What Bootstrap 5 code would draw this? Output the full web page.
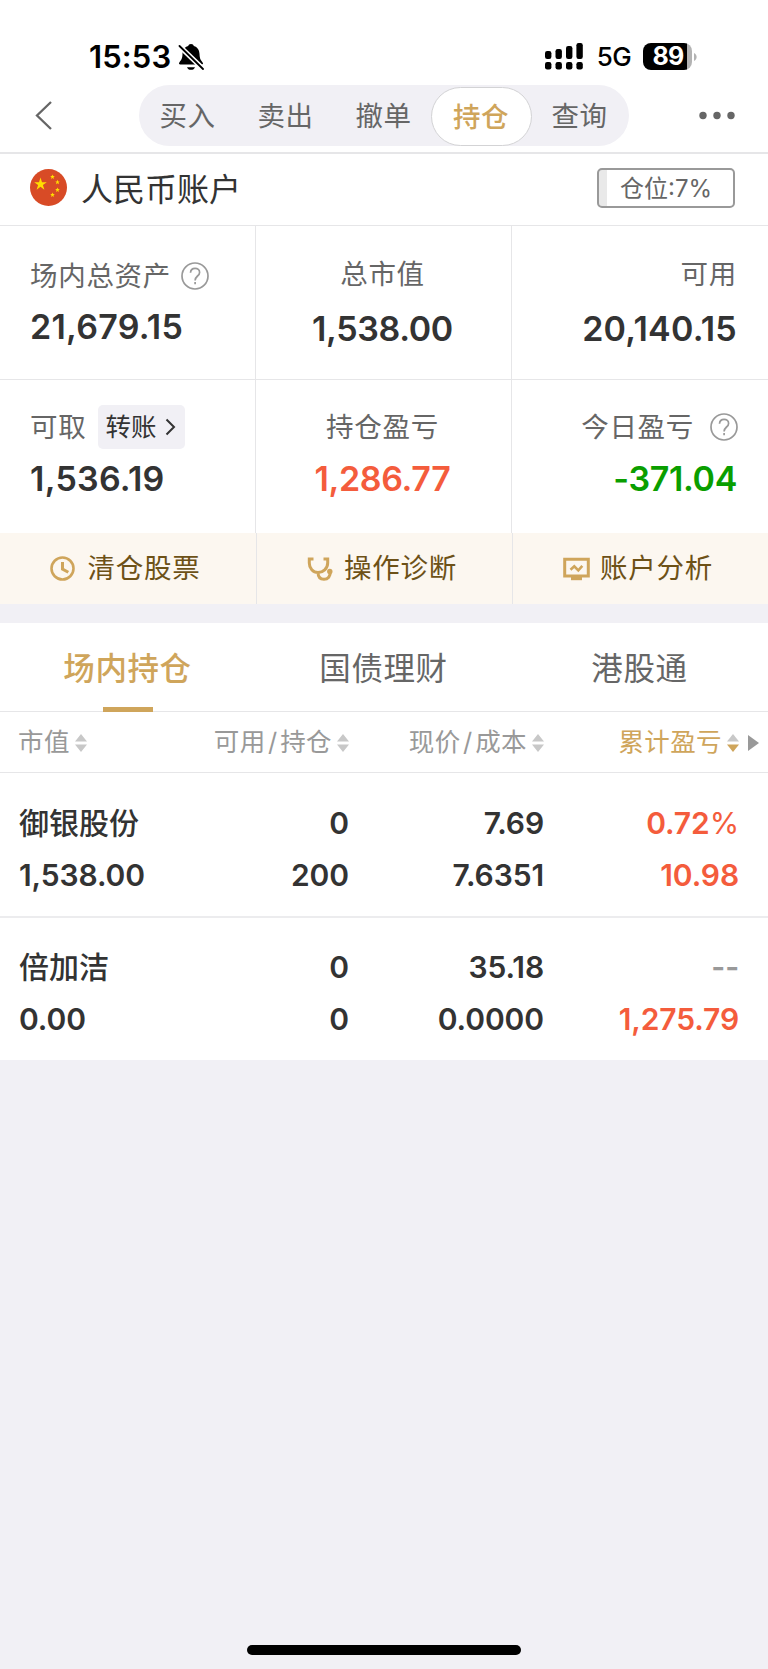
<!DOCTYPE html>
<html lang="zh-CN">
<head>
<meta charset="utf-8">
<meta name="viewport" content="width=device-width, initial-scale=1">
<title>持仓</title>
<link href="https://cdn.jsdelivr.net/npm/bootstrap@5.3.0/dist/css/bootstrap.min.css" rel="stylesheet">
<style>
  :root { --gold:#cfa55b; --ink:#333; --mid:#666; --soft:#999; --panel:#f1f0f5; --rule:#e6e6e8; --up:#f45c3c; --down:#0a9e00; }
  body { font-family: Inter, "Noto Sans CJK SC", sans-serif; background: var(--panel); color: var(--ink); min-height: 1669px; }
  svg { display: block; flex: none; }
  .status { height: 85px; padding: 31px 71px 0 89px; color: #000; }
  .clock { font-size: 31px; font-weight: 600; line-height: 52px; letter-spacing: .1px; }
  .signal { margin-top: -1px; }
  .net { font-size: 26px; line-height: 52px; letter-spacing: -.6px; font-weight: 500; margin: 0 12px 0 14px; }
  .battery { width: 49px; height: 27px; border-radius: 8px; background: linear-gradient(90deg,#000 44px,#b3b3b3 44px); color: #fff; font-size: 25px; font-weight: 700; line-height: 27px; padding-left: 9.5px; letter-spacing: -.8px; margin-top: -1px; }
  .topnav { height: 69px; border-bottom: 2px solid var(--rule); }
  .segments { width: 490px; height: 61px; margin-left: 85px; border-radius: 31px; background: var(--panel); }
  .segments a { flex: 1 1 0; font-size: 27.5px; line-height: 62px; color: var(--mid); letter-spacing: .5px; text-align: center; text-decoration: none; padding-right: 1px; }
  .segments a.active { flex: 0 0 101px; margin: 2px -1px 0 -2px; height: 59px; line-height: 58px; border: 1px solid #d3d3d5; border-radius: 30px; background: #fff; color: var(--gold); font-weight: 500; }
  .account { height: 72px; padding: 0 33px 0 30px; border-bottom: 1px solid var(--rule); }
  .account h1 { font-size: 32px; line-height: 40px; letter-spacing: 0; font-weight: 400; margin: 1px 0 0 14px; }
  .ratio { width: 138px; height: 40px; margin-top: -4px; border: 2px solid #999; border-radius: 5px; background: linear-gradient(90deg,#e9e9e9 8px,#fff 8px); font-size: 24px; line-height: 37px; color: var(--mid); padding-left: 21px; white-space: nowrap; }
  .assets { display: grid; grid-template-columns: 256px 256px 256px; grid-template-rows: 154px 153px; }
  .asset { border-right: 1px solid var(--rule); padding: 32px 31px 0 30px; }
  .asset:nth-child(3n) { border-right: 0; }
  .asset:nth-child(-n+3) { border-bottom: 1px solid var(--rule); }
  .asset:nth-child(n+4) { padding-top: 31px; }
  .asset:nth-child(3n+2) { padding-left: 0; padding-right: 2px; text-align: center; }
  .asset:nth-child(3n) { text-align: right; }
  .caption { font-size: 27.5px; line-height: 32px; height: 32px; letter-spacing: .7px; color: var(--mid); }
  .amount { font-size: 34px; line-height: 40px; font-weight: 600; letter-spacing: -.35px; margin-top: 16px; }
  .amount.loose { letter-spacing: .25px; }
  .transfer { height: 44px; width: 87px; margin-left: 12px; padding: 0 9px 0 7px; border-radius: 5px; background: var(--panel); color: var(--ink); font-size: 25.5px; letter-spacing: 0; }
  .up { color: var(--up); } .down { color: var(--down); }
  .actions { height: 71px; background: #fcf7f0; }
  .actions a { flex: 0 0 256px; font-size: 27.5px; letter-spacing: .8px; line-height: 71px; color: #6d5117; text-decoration: none; padding-right: 5px; }
  .actions a + a { border-left: 1px solid var(--rule); }
  .board { margin-top: 19px; }
  .kinds { height: 89px; border-bottom: 1px solid var(--rule); }
  .kinds a { flex: 0 0 256px; height: 89px; font-size: 31.5px; letter-spacing: .6px; line-height: 92px; text-align: center; color: var(--mid); text-decoration: none; position: relative; padding-right: 1px; }
  .kinds a.active { color: var(--gold); font-weight: 500; }
  .kinds a.active::after { content: ""; position: absolute; left: 103px; bottom: 0; width: 50px; height: 5px; background: var(--gold); }
  .sheet { display: grid; grid-template-columns: 172px 177px 195px 195px 29px; padding: 0; }
  .sheet > * { text-align: right; }
  .sheet > :first-child { text-align: left; padding-left: 19px; }
  .heads { height: 61px; border-bottom: 1px solid var(--rule); font-size: 25.5px; letter-spacing: .4px; color: var(--soft); align-items: center; padding-top: 1px; }
  .heads > div { display: flex; align-items: center; justify-content: flex-end; gap: 5px; white-space: nowrap; }
  .heads > :first-child { justify-content: flex-start; padding-left: 18px; }
  .slash { padding: 0 2.5px; }
  .holding { height: 143px; font-size: 30px; font-weight: 600; letter-spacing: -.1px; line-height: 52px; padding-top: 24px; }
  .holding + .holding { border-top: 2px solid #ececee; height: 144px; padding-top: 22.5px; }
  .stock { font-weight: 500; letter-spacing: 0; }
  .homebar { position: fixed; left: 247px; bottom: 14px; width: 274px; height: 10px; border-radius: 5px; background: #000; }
</style>
</head>
<body>
<div class="bg-white">
  <div class="status d-flex align-items-start justify-content-between">
    <div class="d-flex align-items-center">
      <span class="clock">15:53</span>
      <svg style="margin-left:7px" width="26" height="28" viewBox="0 0 26 28"><path d="M13 1c1.600 0 2.600.8 2.800 2 4.200 1.200 5.600 4.600 5.700 8 .2 5 1.200 6 3.100 8.500.8 1.200.4 2-.8 2H2.300c-1.300 0-1.700-1-.8-2.200C3.400 16.600 4.400 15.500 4.500 11c.1-3.800 1.600-7 5.700-8 .3-1.200 1.200-2 2.800-2zM9 24.200h8c-.5 1.700-2 2.600-4 2.600s-3.500-.9-4-2.600z"/><path d="M-1 .8 27 27.800" stroke="#fff" stroke-width="5"/><path d="M1.500 3 25 26" stroke="#000" stroke-width="1.800" stroke-linecap="round"/></svg>
    </div>
    <div class="d-flex align-items-center">
      <svg class="signal" width="38" height="27" viewBox="0 0 38 27"><rect y="8" width="6.400" height="8" rx="2.200"/><rect x="10.500" y="6" width="6.400" height="10" rx="2.200"/><rect x="21" y="3" width="6.400" height="13" rx="2.200"/><rect x="31.400" width="6.400" height="16" rx="2.200"/><rect y="19" width="6.400" height="7.500" rx="2.200"/><rect x="10.500" y="19" width="6.400" height="7.500" rx="2.200"/><rect x="21" y="19" width="6.400" height="7.500" rx="2.200"/><rect x="31.400" y="19" width="6.400" height="7.500" rx="2.200"/></svg>
      <span class="net">5G</span>
      <div class="battery">89</div>
      <svg width="5" height="10" viewBox="0 0 5 10"><path d="M2 1c3.500 1.500 3.500 6.500 0 8z" fill="#b3b3b3"/></svg>
    </div>
  </div>

  <nav class="topnav d-flex align-items-start">
    <svg style="margin:15px 0 0 34px" width="20" height="31" viewBox="0 0 20 31" fill="none" stroke="#666" stroke-width="2.300"><path d="M17 2 3 15.500 17 29"/></svg>
    <div class="segments d-flex">
      <a href="#">买入</a><a href="#">卖出</a><a href="#">撤单</a><a href="#" class="active">持仓</a><a href="#">查询</a>
    </div>
    <svg style="margin:26px 0 0 70px" width="37" height="9" viewBox="0 0 37 9" fill="#666"><circle cx="4" cy="4.500" r="3.700"/><circle cx="18" cy="4.500" r="3.700"/><circle cx="32" cy="4.500" r="3.700"/></svg>
  </nav>

  <section class="account d-flex align-items-center">
    <svg style="margin-top:-4px" width="37" height="37" viewBox="0 0 37 37"><circle cx="18.500" cy="18.500" r="18.500" fill="#d84b26"/><g fill="#ffde00"><path d="m10.500 8.500 1.500 4.700h4.800l-3.900 2.800 1.500 4.700-3.900-2.900-3.900 2.900 1.500-4.700-3.900-2.800H9z"/><path id="s" d="m22.500 5.500.7 1.600h1.600l-1.300 1.100.5 1.700-1.500-1-1.500 1 .5-1.700-1.300-1.100h1.600z"/><use href="#s" x="5" y="5.300"/><use href="#s" x="5" y="13"/><use href="#s" y="18"/></g></svg>
    <h1>人民币账户</h1>
    <div class="ratio ms-auto">仓位:7%</div>
  </section>

  <section class="assets">
    <div class="asset">
      <div class="caption d-flex align-items-center" style="margin-top:2px">场内总资产
        <svg style="margin-left:10px" width="28" height="28" viewBox="0 0 28 28" fill="none" stroke="#999" stroke-width="1.700"><circle cx="14" cy="14" r="13"/><path d="M9.500 10.700c.2-2.700 2-4.300 4.600-4.300 2.500 0 4.500 1.600 4.500 4 0 3.600-4.500 3.700-4.500 8M14.100 20v2.200"/></svg></div>
      <div class="amount loose" style="margin-top:15px">21,679.15</div>
    </div>
    <div class="asset"><div class="caption">总市值</div><div class="amount" style="margin-top:19px">1,538.00</div></div>
    <div class="asset"><div class="caption">可用</div><div class="amount loose" style="margin-top:19px">20,140.15</div></div>
    <div class="asset">
      <div class="caption d-flex align-items-center">可取
        <span class="transfer d-flex align-items-center justify-content-between">转账<svg width="11" height="18" viewBox="0 0 11 18" fill="none" stroke="#333" stroke-width="2"><path d="m1.500 1.500 7.500 7.500-7.500 7.500"/></svg></span></div>
      <div class="amount loose">1,536.19</div>
    </div>
    <div class="asset"><div class="caption">持仓盈亏</div><div class="amount up">1,286.77</div></div>
    <div class="asset">
      <div class="caption d-flex align-items-center justify-content-end" style="margin-right:-1px">今日盈亏
        <svg style="margin-left:16px" width="28" height="28" viewBox="0 0 28 28" fill="none" stroke="#999" stroke-width="1.700"><circle cx="14" cy="14" r="13"/><path d="M9.500 10.700c.2-2.700 2-4.300 4.600-4.300 2.500 0 4.500 1.600 4.500 4 0 3.600-4.500 3.700-4.500 8M14.100 20v2.200"/></svg></div>
      <div class="amount down">-371.04</div>
    </div>
  </section>

  <nav class="actions d-flex">
    <a href="#" class="d-flex align-items-center justify-content-center"><svg style="margin-right:12px" width="25" height="25" viewBox="0 0 25 25" fill="none" stroke="#cfa55b"><circle cx="12.500" cy="12.500" r="11" stroke-width="2.600"/><path d="M12.500 6v7l5.800 3.200" stroke-width="3"/></svg>清仓股票</a>
    <a href="#" class="d-flex align-items-center justify-content-center"><svg style="margin-right:11px" width="26" height="25" viewBox="0 0 26 25" fill="none" stroke="#cfa55b" stroke-width="3"><path d="M6.500 3H2.300v4c0 5.500 3.700 9.500 8.700 9.500s9.700-4 9.700-9.500V3h-4.200M11 16c0 5 2.500 7.300 6 7.300 4 0 6.500-3 6.300-7.800"/><circle cx="22.800" cy="15.500" r="2.700" fill="#cfa55b" stroke="none"/></svg>操作诊断</a>
    <a href="#" class="d-flex align-items-center justify-content-center"><svg style="margin-right:10px" width="27" height="24" viewBox="0 0 27 24" fill="none" stroke="#cfa55b"><path d="M1.700 2.200h23.600v16.800H1.700z" stroke-width="3"/><path d="M8 20h11v3.200H8z" fill="#cfa55b" stroke="none"/><path d="m7.500 12.800 3.800-3.500 4 4 4-4.500" stroke-width="2.600"/></svg>账户分析</a>
  </nav>
</div>

<main class="board bg-white">
  <nav class="kinds d-flex"><a href="#" class="active">场内持仓</a><a href="#">国债理财</a><a href="#">港股通</a></nav>
  <div class="sheet heads">
    <div>市值<svg width="12" height="18" viewBox="0 0 12 18" fill="#c8c8c8"><path d="m6 0 6 7.500H0zM0 10.500h12L6 18z"/></svg></div>
    <div><span>可用<span class="slash">/</span>持仓</span><svg width="12" height="18" viewBox="0 0 12 18" fill="#c8c8c8"><path d="m6 0 6 7.500H0zM0 10.500h12L6 18z"/></svg></div>
    <div><span>现价<span class="slash">/</span>成本</span><svg width="12" height="18" viewBox="0 0 12 18" fill="#c8c8c8"><path d="m6 0 6 7.500H0zM0 10.500h12L6 18z"/></svg></div>
    <div style="color:var(--gold)">累计盈亏<svg width="12" height="18" viewBox="0 0 12 18"><path d="m6 0 6 7.500H0z" fill="#c8c8c8"/><path d="M0 10.500h12L6 18z" fill="#cfa55b"/></svg></div>
    <div style="justify-content:flex-start;padding-left:9px"><svg width="11" height="16" viewBox="0 0 11 16" fill="#999"><path d="m0 0 11 8-11 8z"/></svg></div>
  </div>
  <div class="sheet holding">
    <div><span class="stock">御银股份</span><br>1,538.00</div><div>0<br>200</div><div>7.69<br>7.6351</div><div class="up">0.72<span class="fw-normal">%</span><br>10.98</div>
  </div>
  <div class="sheet holding">
    <div><span class="stock">倍加洁</span><br>0.00</div><div>0<br>0</div><div>35.18<br>0.0000</div><div class="up"><span style="color:#999">--</span><br>1,275.79</div>
  </div>
</main>
<div class="homebar"></div>
<script src="https://cdn.jsdelivr.net/npm/bootstrap@5.3.0/dist/js/bootstrap.bundle.min.js"></script>
</body>
</html>
